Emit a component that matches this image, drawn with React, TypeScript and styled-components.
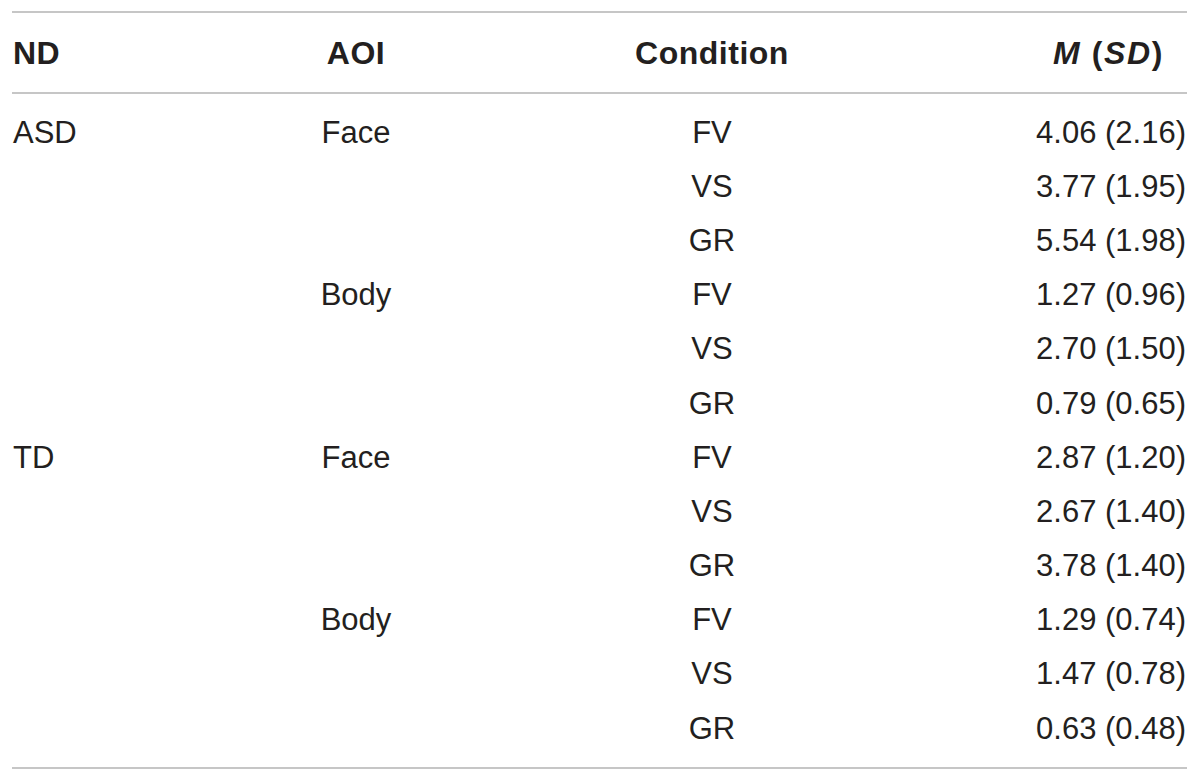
import React from "react";
import styled, { createGlobalStyle } from "styled-components";

const Global = createGlobalStyle`
  html, body { margin: 0; padding: 0; background: #ffffff; }
  body { font-family: "Liberation Sans", Arial, sans-serif; color: #231f20; }
`;

const Wrap = styled.div`
  padding: 11px 13px 0 12px;
  width: 1175px;
`;

const Table = styled.div`
  border-top: 2px solid #c6c6c6;
  border-bottom: 2px solid #c6c6c6;
`;

const Row = styled.div<{ $head?: boolean }>`
  display: grid;
  grid-template-columns: 200px 288px 424px 263px;
  align-items: center;
  height: ${(p) => (p.$head ? "79px" : "54.2px")};
  font-size: ${(p) => (p.$head ? "32px" : "31px")};
  font-weight: ${(p) => (p.$head ? 700 : 400)};
  letter-spacing: ${(p) => (p.$head ? "0.5px" : "0")};
  line-height: 1;
`;

const Body = styled.div`
  border-top: 2px solid #c6c6c6;
  padding: 11px 0 12px;
`;

const Cell = styled.div<{ $align: "left" | "center" | "right"; $pr?: number; $wide?: boolean }>`
  text-align: ${(p) => p.$align};
  padding-left: ${(p) => (p.$align === "left" ? "1px" : "0")};
  padding-right: ${(p) => (p.$pr ?? 0)}px;
  letter-spacing: ${(p) => (p.$wide ? "1.6px" : "inherit")};
  word-spacing: ${(p) => (p.$wide ? "0px" : "normal")};
  white-space: nowrap;
`;

const rows: [string, string, string, string][] = [
  ["ASD", "Face", "FV", "4.06 (2.16)"],
  ["", "", "VS", "3.77 (1.95)"],
  ["", "", "GR", "5.54 (1.98)"],
  ["", "Body", "FV", "1.27 (0.96)"],
  ["", "", "VS", "2.70 (1.50)"],
  ["", "", "GR", "0.79 (0.65)"],
  ["TD", "Face", "FV", "2.87 (1.20)"],
  ["", "", "VS", "2.67 (1.40)"],
  ["", "", "GR", "3.78 (1.40)"],
  ["", "Body", "FV", "1.29 (0.74)"],
  ["", "", "VS", "1.47 (0.78)"],
  ["", "", "GR", "0.63 (0.48)"],
];

export default function App() {
  return (
    <>
      <Global />
      <Wrap>
        <Table>
          <Row $head>
            <Cell $align="left">ND</Cell>
            <Cell $align="center">AOI</Cell>
            <Cell $align="center">Condition</Cell>
            <Cell $align="right" $pr={23} $wide>
              <i>M</i> (<i>SD</i>)
            </Cell>
          </Row>
          <Body>
            {rows.map((r, i) => (
              <Row key={i}>
                <Cell $align="left">{r[0]}</Cell>
                <Cell $align="center">{r[1]}</Cell>
                <Cell $align="center">{r[2]}</Cell>
                <Cell $align="right" $pr={1}>
                  {r[3]}
                </Cell>
              </Row>
            ))}
          </Body>
        </Table>
      </Wrap>
    </>
  );
}
